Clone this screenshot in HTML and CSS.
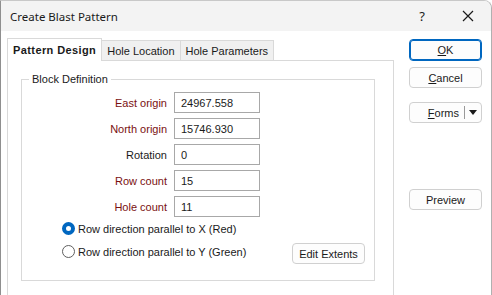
FILE: index.html
```html
<!DOCTYPE html>
<html lang="en">
  <head>
    <meta charset="UTF-8" />
    <meta name="viewport" content="width=device-width, initial-scale=1.0" />
    <link rel="stylesheet" href="styles.css">
  </head>
  <body>
    <div class="window">
      <div class="titlebar">
        <span class="title">Create Blast Pattern</span>
        <span class="help">?</span>
        <span class="close">
          <svg width="12" height="12" viewBox="0 0 12 12"><path d="M1 1L11 11M11 1L1 11" stroke="#1a1a1a" stroke-width="1.2" fill="none"/></svg>
        </span>
      </div>

      <div class="main">
        <div class="left">
          <div class="tabs">
            <div class="tab active">Pattern Design</div>
            <div class="tab">Hole Location</div>
            <div class="tab">Hole Parameters</div>
          </div>
          <div class="panel">
            <fieldset class="group">
              <legend>Block Definition</legend>
              <div class="fields">
                <label class="req">East origin</label>
                <input type="text" value="24967.558" />
                <label class="req">North origin</label>
                <input type="text" value="15746.930" />
                <label>Rotation</label>
                <input type="text" value="0" />
                <label class="req">Row count</label>
                <input type="text" value="15" />
                <label class="req">Hole count</label>
                <input type="text" value="11" />
              </div>
              <div class="radio-row">
                <span class="radio checked"></span>
                <span>Row direction parallel to X (Red)</span>
              </div>
              <div class="radio-row">
                <span class="radio"></span>
                <span>Row direction parallel to Y (Green)</span>
                <button class="btn extents" type="button">Edit Extents</button>
              </div>
            </fieldset>
          </div>
        </div>

        <div class="side">
          <button class="btn primary" type="button"><u>O</u>K</button>
          <button class="btn" type="button"><u>C</u>ancel</button>
          <button class="btn split" type="button">
            <span class="split-text"><u>F</u>orms</span>
            <span class="split-arrow">
              <svg width="8" height="5" viewBox="0 0 8 5"><path d="M0 0H8L4 5Z" fill="#1a1a1a"/></svg>
            </span>
          </button>
          <button class="btn preview" type="button">Preview</button>
        </div>
      </div>
    </div>
  </body>
</html>
```

FILE: styles.css
```css
body {
  margin: 0;
  font-family: "Liberation Sans", Arial, sans-serif;
  font-size: 11px;
  color: #1a1a1a;
  background: #ffffff;
  overflow: hidden;
}
.window {
  width: 490px;
  height: 300px;
  border-left: 1px solid #8f8f8f;
  border-right: 1px solid #b0b0b0;
  border-top: 1px solid #c8c8c8;
  border-top-right-radius: 8px;
  background: #ffffff;
  overflow: hidden;
}
.titlebar {
  height: 30px;
  background: #f3f3f3;
  display: flex;
  align-items: center;
  font-family: "Noto Sans", sans-serif;
}
.title {
  margin-left: 9px;
  flex: 1;
  font-size: 11.5px;
}
.help {
  width: 12px;
  text-align: center;
  margin-right: 34px;
  font-size: 13px;
}
.close {
  display: flex;
  margin-right: 17px;
}
.main {
  display: flex;
  padding: 7px 0 0 6px;
}
.left {
  width: 387px;
}
.tabs {
  display: flex;
  align-items: flex-end;
  padding-left: 1px;
  height: 22px;
}
.tab {
  height: 19px;
  line-height: 20px;
  padding: 0 5px;
  background: #f0f0f0;
  border: 1px solid #d9d9d9;
  border-bottom: none;
  margin-left: -1px;
}
.tab.active {
  height: 22px;
  line-height: 22px;
  background: #ffffff;
  font-weight: bold;
  letter-spacing: 0.4px;
  padding: 0 5px;
  margin-bottom: -1px;
  position: relative;
}
.panel {
  border: 1px solid #d9d9d9;
  border-bottom: none;
  height: 240px;
  padding: 12px 18px 0 13px;
}
.group {
  margin: 0;
  border: 1px solid #d9d9d9;
  padding: 7px 0 11px 0;
  height: 188px;
}
.group legend {
  margin-left: 7px;
  padding: 0 3px;
}
.fields {
  display: grid;
  grid-template-columns: 145px 86px;
  column-gap: 7px;
  row-gap: 5px;
  align-items: center;
}
.fields label {
  text-align: right;
}
.fields label.req {
  color: #7a1010;
}
.fields input {
  height: 21px;
  box-sizing: border-box;
  border: 1px solid #a8a8a8;
  padding: 0 6px;
  font-family: inherit;
  font-size: 11px;
  color: #1a1a1a;
  margin: 0;
}
.radio-row {
  display: flex;
  align-items: center;
  height: 23px;
  padding-left: 40px;
  gap: 3px;
}
.radio-row:first-of-type {
  margin-top: 4px;
}
.radio {
  width: 11px;
  height: 11px;
  border-radius: 50%;
  border: 1px solid #5f5f5f;
  background: #ffffff;
}
.radio.checked {
  width: 5px;
  height: 5px;
  border: 4px solid #0067c0;
}
.btn {
  height: 21px;
  box-sizing: border-box;
  border: 1px solid #d0d0d0;
  border-radius: 4px;
  background: #fdfdfd;
  font-family: inherit;
  font-size: 11px;
  color: #1a1a1a;
  padding: 0;
}
.extents {
  margin-left: auto;
  margin-right: 9px;
  margin-top: 4px;
  width: 73px;
}
.side {
  display: flex;
  flex-direction: column;
  padding-left: 15px;
  padding-top: 1px;
}
.side .btn {
  width: 73px;
  margin-bottom: 6px;
}
.side .primary {
  height: 22px;
  border: 1px solid #0067c0;
  box-shadow: inset 0 0 0 1px #0067c0;
}
.side .split {
  display: flex;
  align-items: center;
  margin-top: 8px;
}
.split-text {
  flex: 1;
  text-align: right;
  padding-right: 5px;
}
.split-arrow {
  display: flex;
  align-items: center;
  justify-content: center;
  width: 16px;
  height: 13px;
  border-left: 1px solid #9a9a9a;
}
.side .preview {
  margin-top: 60px;
}
```
